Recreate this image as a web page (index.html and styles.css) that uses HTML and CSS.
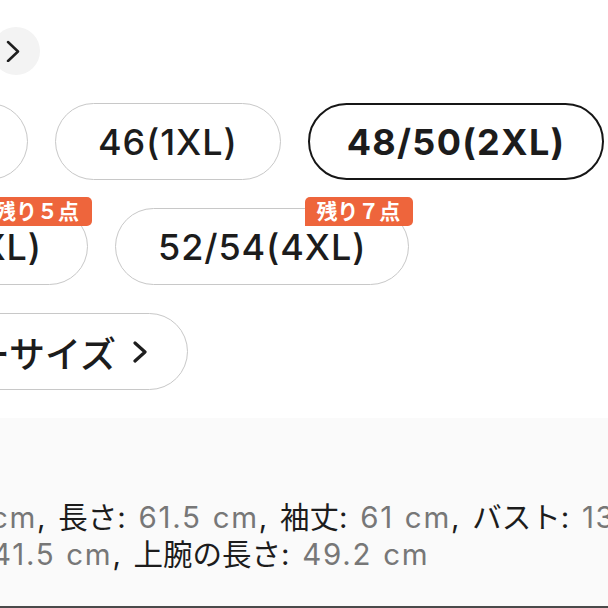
FILE: index.html
```html
<!DOCTYPE html>
<html lang="ja">
<head>
<meta charset="utf-8">
<title>サイズ</title>
<link rel="stylesheet" href="styles.css">
</head>
<body>
<div class="page">
  <div class="top">
    <div class="round-btn">
      <svg class="chev-top" width="14" height="22" viewBox="0 0 14 22"><polyline points="2,2 12,11.5 2,21" fill="none" stroke="#1e1e1e" stroke-width="2.5" stroke-linecap="round" stroke-linejoin="round"/></svg>
    </div>
  </div>
  <div class="sizes">
    <div class="row">
      <div class="pill pill-cut cut-a">44(XL)</div>
      <div class="pill">46(1XL)</div>
      <div class="pill selected">48/50(2XL)</div>
    </div>
    <div class="row">
      <div class="pill pill-cut cut-b">50(3XL)<span class="badge">残り５点</span></div>
      <div class="pill">52/54(4XL)<span class="badge">残り７点</span></div>
    </div>
    <div class="row">
      <div class="pill pill-cut cut-c"><span class="more-text">フリーサイズ</span><svg class="chev-more" width="14" height="24" viewBox="0 0 14 24"><polyline points="2,3 12,12 2,21" fill="none" stroke="#1e1e1e" stroke-width="3.2" stroke-linecap="round" stroke-linejoin="round"/></svg></div>
    </div>
  </div>
  <section class="measure">
    <div class="line line-1"><span class="v">cm</span>, <span class="k">長さ</span>: <span class="v">61.5 cm</span>, <span class="k">袖丈</span>: <span class="v">61 cm</span>, <span class="k">バスト</span>: <span class="v">130 cm</span></div>
    <div class="line line-2"><span class="v">41.5 cm</span>, <span class="k">上腕の長さ</span>: <span class="v">49.2 cm</span></div>
  </section>
  <div class="bottom-edge"></div>
</div>
</body>
</html>
```
FILE: styles.css
```css
html, body {
  margin: 0;
  padding: 0;
  background: #ffffff;
}
body {
  width: 608px;
  height: 608px;
  overflow: hidden;
  font-family: "Inter", "Noto Sans CJK JP", sans-serif;
  color: #1c1c1c;
}
.page {
  width: 608px;
  height: 608px;
  display: flex;
  flex-direction: column;
  overflow: hidden;
}
.top {
  padding-top: 27px;
  height: 48px;
  flex: none;
}
.round-btn {
  width: 48px;
  height: 48px;
  margin-left: -8px;
  border-radius: 50%;
  background: #f3f3f3;
  display: flex;
  align-items: center;
  justify-content: center;
}
.chev-top {
  margin-right: 6px;
}
.sizes {
  margin-top: 28px;
  display: flex;
  flex-direction: column;
  gap: 28px;
  flex: none;
}
.row {
  display: flex;
  gap: 27px;
}
.pill {
  position: relative;
  flex: none;
  box-sizing: border-box;
  height: 77px;
  border: 1px solid #c8c8c8;
  border-radius: 39px;
  padding: 0 42px;
  display: flex;
  align-items: center;
  justify-content: center;
  font-size: 36px;
  font-weight: 500;
  letter-spacing: 0.9px;
  white-space: nowrap;
  color: #1c1c1c;
  background: #fff;
}
.pill.selected {
  border: 2px solid #161616;
  font-weight: 700;
  letter-spacing: 1.3px;
  padding: 0 37px;
}
.pill-cut {
  justify-content: flex-end;
}
.cut-a {
  width: 220px;
  margin-left: -192px;
}
.cut-b {
  width: 220px;
  margin-left: -132px;
  padding-right: 45px;
}
.cut-c {
  width: 300px;
  margin-left: -112px;
  padding-right: 40px;
}
.more-text {
  flex: none;
  letter-spacing: 0;
}
.chev-more {
  flex: none;
  margin-left: 17px;
}
.badge {
  position: absolute;
  top: -12px;
  right: -5px;
  height: 29px;
  line-height: 29px;
  padding: 0 13px 0 11px;
  font-size: 21px;
  font-weight: 700;
  letter-spacing: 0;
  color: #ffffff;
  background: #ee653c;
  border-radius: 5px 5px 5px 0;
}
.measure {
  margin-top: 28px;
  flex: 1;
  background: #fafafa;
  padding-top: 81px;
  font-size: 29.5px;
  line-height: 37px;
  color: #1c1c1c;
}
.line {
  white-space: nowrap;
  letter-spacing: 1.7px;
  word-spacing: 1px;
}
.line-1 {
  margin-left: -9px;
}
.line-2 {
  margin-left: -8px;
}
.k {
  letter-spacing: 0;
}
.v {
  color: #777777;
}
.bottom-edge {
  height: 2px;
  background: #4a4a4a;
  flex: none;
}
```
